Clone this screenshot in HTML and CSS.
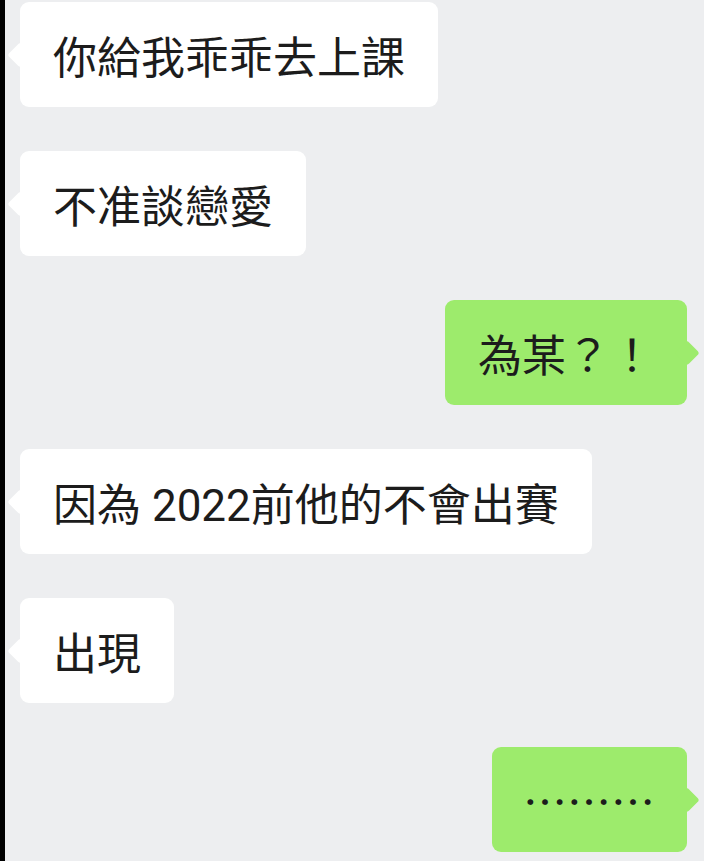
FILE: index.html
```html
<!DOCTYPE html>
<html lang="zh-Hant">
<head>
  <meta charset="UTF-8" />
  <meta name="viewport" content="width=device-width, initial-scale=1.0"/>
  <title>聊天</title>
  <link rel="stylesheet" href="styles.css">
</head>
<body>
  <main class="chat">
    <div class="row recebida">
      <div class="bolha">你給我乖乖去上課</div>
    </div>
    <div class="row recebida">
      <div class="bolha">不准談戀愛</div>
    </div>
    <div class="row enviada">
      <div class="bolha">為某？！</div>
    </div>
    <div class="row recebida">
      <div class="bolha">因為 2022前他的不會出賽</div>
    </div>
    <div class="row recebida">
      <div class="bolha">出現</div>
    </div>
    <div class="row enviada">
      <div class="bolha reticencias" lang="zh-TW">………</div>
    </div>
  </main>
</body>
</html>
```

FILE: styles.css
```css
:root {
  --fundo: #edeef0;
  --branco: #ffffff;
  --verde: #9deb6c;
  --texto: #1c1c1c;
}

* {
  margin: 0;
  padding: 0;
  box-sizing: border-box;
}

html, body {
  height: 100%;
}

body {
  background-color: var(--fundo);
  border-left: 5px solid #000;
  color: var(--texto);
  font-family: Roboto, "Noto Sans CJK TC", sans-serif;
  overflow: hidden;
}

.chat {
  display: flex;
  flex-direction: column;
  gap: 44px;
  padding: 2px 17px 0 15px;
}

.row {
  display: flex;
}

.row.enviada {
  justify-content: flex-end;
}

.bolha {
  position: relative;
  display: flex;
  align-items: center;
  height: 105px;
  padding: 0 33px;
  border-radius: 9px;
  font-size: 44px;
  white-space: nowrap;
  background-color: var(--branco);
}

.bolha.reticencias {
  font-family: "Noto Sans CJK TC", sans-serif;
  padding: 0 32px 0 31px;
}

/* rabinho do balao */
.bolha::before {
  content: "";
  position: absolute;
  top: 50%;
  width: 18px;
  height: 18px;
  border-radius: 3px;
  background-color: inherit;
  transform: translateY(-50%) rotate(45deg);
}

.recebida .bolha::before {
  left: -9px;
}

.enviada .bolha {
  background-color: var(--verde);
}

.enviada .bolha::before {
  right: -9px;
}
```
